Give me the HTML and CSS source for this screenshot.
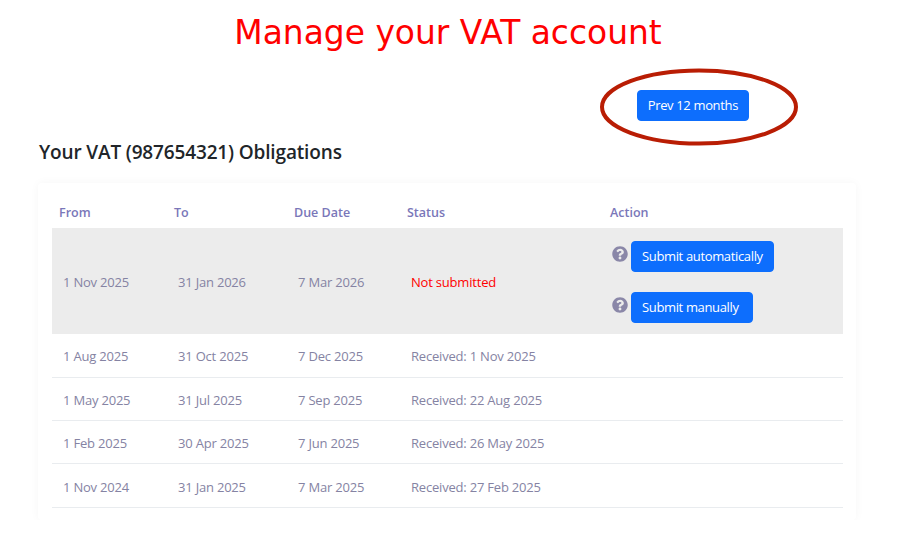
FILE: index.html
```html
<!DOCTYPE html>
<html lang="en">
<head>
    <meta charset="UTF-8">
    <meta name="viewport" content="width=device-width, initial-scale=1.0">
    <title>Manage your VAT account</title>
    <link rel="stylesheet" href="styles.css">
</head>
<body>
    <h1 class="page-title">Manage your VAT account</h1>

    <div class="toolbar">
        <div class="highlight">
            <button class="btn">Prev 12 months</button>
            <svg class="highlight-ring" viewBox="0 0 200 78" width="200" height="78" aria-hidden="true">
                <ellipse cx="100" cy="39" rx="97" ry="36.5" fill="none" stroke="#b91d04" stroke-width="4"/>
            </svg>
        </div>
    </div>

    <h2 class="section-title">Your VAT (987654321) Obligations</h2>

    <div class="card">
        <table class="obligations">
            <thead>
                <tr>
                    <th class="col-from">From</th>
                    <th class="col-to">To</th>
                    <th class="col-due">Due Date</th>
                    <th class="col-status">Status</th>
                    <th>Action</th>
                </tr>
            </thead>
            <tbody>
                <tr class="open">
                    <td>1 Nov 2025</td>
                    <td>31 Jan 2026</td>
                    <td>7 Mar 2026</td>
                    <td class="not-submitted">Not submitted</td>
                    <td>
                        <div class="action">
                            <svg class="help" viewBox="0 0 512 512" aria-hidden="true"><path d="M504 256c0 136.997-111.043 248-248 248S8 392.997 8 256C8 119.083 119.043 8 256 8s248 111.083 248 248zM262.655 90c-54.497 0-89.255 22.957-116.549 63.758-3.536 5.286-2.353 12.415 2.715 16.258l34.699 26.31c5.205 3.947 12.621 3.008 16.665-2.122 17.864-22.658 30.113-35.797 57.303-35.797 20.429 0 45.698 13.148 45.698 32.958 0 14.976-12.363 22.667-32.534 33.976C247.128 238.528 216 254.941 216 296v4c0 6.627 5.373 12 12 12h56c6.627 0 12-5.373 12-12v-1.333c0-28.462 83.186-29.647 83.186-106.667 0-58.002-60.165-102-116.531-102zM256 338c-25.365 0-46 20.635-46 46 0 25.364 20.635 46 46 46s46-20.636 46-46c0-25.365-20.635-46-46-46z"/></svg>
                            <button class="btn">Submit automatically</button>
                        </div>
                        <div class="action">
                            <svg class="help" viewBox="0 0 512 512" aria-hidden="true"><path d="M504 256c0 136.997-111.043 248-248 248S8 392.997 8 256C8 119.083 119.043 8 256 8s248 111.083 248 248zM262.655 90c-54.497 0-89.255 22.957-116.549 63.758-3.536 5.286-2.353 12.415 2.715 16.258l34.699 26.31c5.205 3.947 12.621 3.008 16.665-2.122 17.864-22.658 30.113-35.797 57.303-35.797 20.429 0 45.698 13.148 45.698 32.958 0 14.976-12.363 22.667-32.534 33.976C247.128 238.528 216 254.941 216 296v4c0 6.627 5.373 12 12 12h56c6.627 0 12-5.373 12-12v-1.333c0-28.462 83.186-29.647 83.186-106.667 0-58.002-60.165-102-116.531-102zM256 338c-25.365 0-46 20.635-46 46 0 25.364 20.635 46 46 46s46-20.636 46-46c0-25.365-20.635-46-46-46z"/></svg>
                            <button class="btn btn-manual">Submit manually</button>
                        </div>
                    </td>
                </tr>
                <tr>
                    <td>1 Aug 2025</td>
                    <td>31 Oct 2025</td>
                    <td>7 Dec 2025</td>
                    <td>Received: 1 Nov 2025</td>
                    <td></td>
                </tr>
                <tr>
                    <td>1 May 2025</td>
                    <td>31 Jul 2025</td>
                    <td>7 Sep 2025</td>
                    <td>Received: 22 Aug 2025</td>
                    <td></td>
                </tr>
                <tr>
                    <td>1 Feb 2025</td>
                    <td>30 Apr 2025</td>
                    <td>7 Jun 2025</td>
                    <td>Received: 26 May 2025</td>
                    <td></td>
                </tr>
                <tr>
                    <td>1 Nov 2024</td>
                    <td>31 Jan 2025</td>
                    <td>7 Mar 2025</td>
                    <td>Received: 27 Feb 2025</td>
                    <td></td>
                </tr>
            </tbody>
        </table>
    </div>
</body>
</html>
```

FILE: styles.css
```css
body {
    margin: 0;
    background-color: #fff;
    font-family: "Open Sans", "Noto Sans", sans-serif;
    font-size: 13px;
    letter-spacing: -0.2px;
    color: #212529;
}
.page-title {
    margin: 0;
    padding-top: 12px;
    padding-right: 4px;
    text-align: center;
    font-family: "DejaVu Sans", sans-serif;
    font-size: 32.9px;
    font-weight: 400;
    letter-spacing: 0;
    line-height: 42px;
    color: #f00;
}
.toolbar {
    display: flex;
    justify-content: flex-end;
    padding-top: 36px;
    padding-right: 151px;
}
.highlight {
    position: relative;
    line-height: 0;
}
.highlight-ring {
    position: absolute;
    left: -38px;
    top: -22px;
}
.btn {
    height: 31px;
    padding: 0 10px;
    border: 1px solid #0d6efd;
    border-radius: 4px;
    background-color: #0d6efd;
    color: #fff;
    font-family: inherit;
    font-size: 13px;
    letter-spacing: -0.35px;
    line-height: 1;
    white-space: nowrap;
}
.btn-manual {
    padding-right: 13px;
}
.section-title {
    margin: 19px 0 0 39px;
    font-size: 19px;
    font-weight: 600;
    letter-spacing: -0.15px;
    line-height: 24px;
    color: #212529;
}
.card {
    margin: 19px 44px 0 38px;
    padding: 14px 13px 12px 14px;
    border-radius: 4px;
    box-shadow: 0 0 10px rgba(0, 0, 0, 0.04);
}
.obligations {
    width: 100%;
    border-collapse: collapse;
    table-layout: fixed;
}
.col-from {
    width: 115px;
}
.col-to {
    width: 120px;
}
.col-due {
    width: 113px;
}
.col-status {
    width: 203px;
}
.obligations th {
    box-sizing: border-box;
    height: 31px;
    padding: 0 7px;
    text-align: left;
    font-weight: 600;
    font-size: 12.5px;
    letter-spacing: 0;
    color: #7a77b9;
}
.obligations td {
    box-sizing: border-box;
    height: 43.3px;
    padding: 2px 11px 0;
    border-bottom: 1px solid #e9ecef;
    color: #8583a3;
}
.obligations .open td {
    height: 106px;
    border-bottom: 0;
    background-color: #ececec;
}
.obligations .not-submitted {
    color: #f00;
}
.action {
    display: flex;
    align-items: flex-start;
    margin-left: -2px;
    gap: 3px;
}
.action + .action {
    margin-top: 20px;
}
.help {
    flex: none;
    width: 16px;
    height: 16px;
    margin-top: 5px;
    fill: #8a87a8;
}
```
